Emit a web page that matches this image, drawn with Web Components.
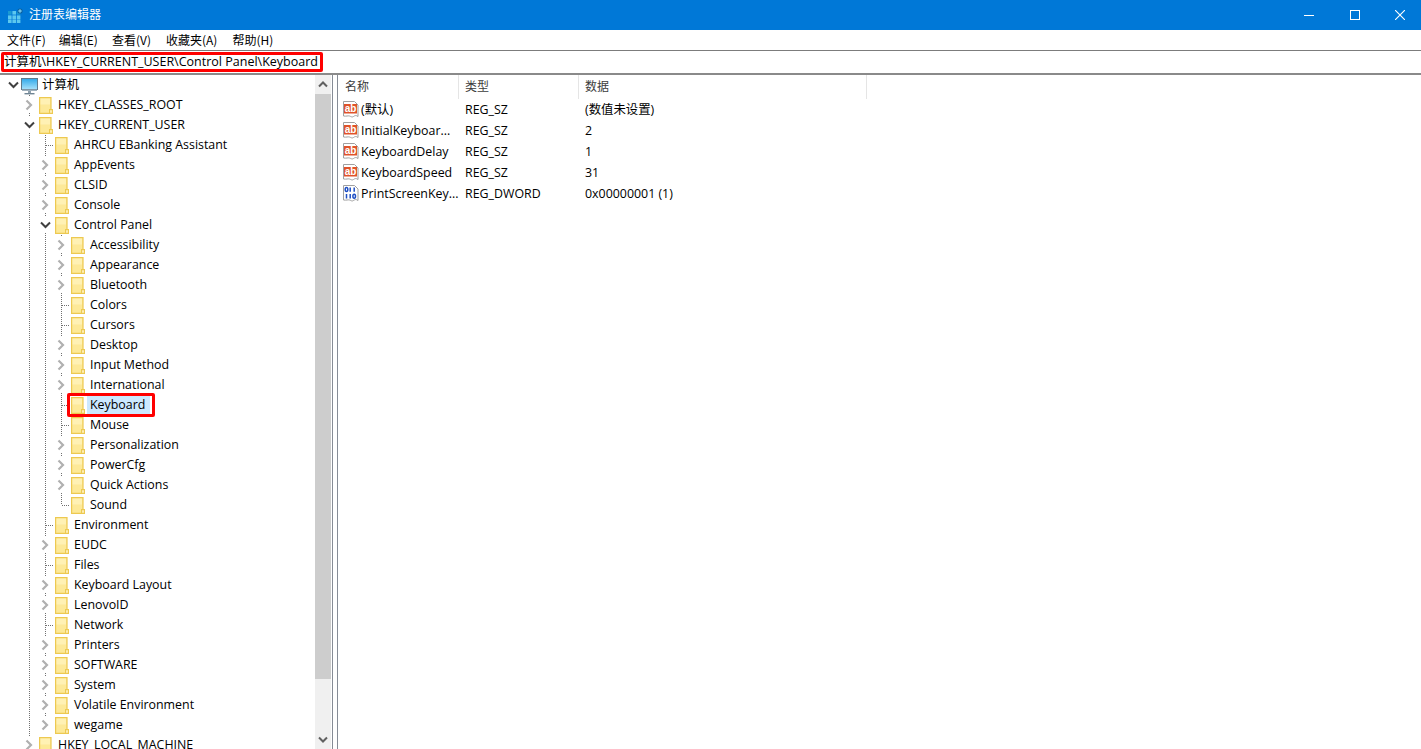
<!DOCTYPE html>
<html lang="zh-CN"><head><meta charset="utf-8"><title>注册表编辑器</title>
<style>
html,body{margin:0;height:100%;overflow:hidden;background:#fff}
body{font:12.4px/20px "Open Sans","Noto Sans CJK SC",sans-serif;color:#000}
</style></head><body>
<template id="t-app"><style>
:host{display:flex;flex-direction:column;height:749px;overflow:hidden}
.panes{flex:1;display:flex;min-height:0}
</style><slot name="top"></slot><div class="panes"><slot></slot></div></template>

<template id="t-title"><style>
:host{display:flex;height:30px;background:#0078d7;color:#fff;align-items:center;font-size:12px}
.ico{margin:0 6px 0 8px;display:flex}
.txt{flex:1;font-family:"Noto Sans CJK SC",sans-serif;line-height:28px;height:30px}
.b{width:46px;height:30px;display:flex;align-items:center;justify-content:center}
.b.c{width:43px;justify-content:flex-start;padding-left:0}
.b.c svg{margin-left:17px}
</style>
<span class="ico"><svg width="15" height="15" viewBox="0 0 15 15"><g fill="#5cc8ee"><rect x="0" y="3" width="3.6" height="3.6" fill="#1b9ad2"/><rect x="4.4" y="3" width="3.6" height="3.6"/><rect x="8.8" y="3" width="3.6" height="3.6" fill="#1b9ad2"/><rect x="0" y="7.4" width="3.6" height="3.6"/><rect x="4.4" y="7.4" width="3.6" height="3.6"/><rect x="8.8" y="7.4" width="3.6" height="3.6"/><rect x="0" y="11.4" width="3.6" height="3.6"/><rect x="4.4" y="11.4" width="3.6" height="3.6"/><rect x="8.8" y="11.4" width="3.6" height="3.6"/></g><circle cx="12" cy="3" r="2.6" fill="#0a5f9e"/><path d="M12 1.2v3.6M10.2 3h3.6" stroke="#8fe0ff" stroke-width="1"/></svg></span>
<span class="txt"><slot></slot></span>
<span class="b"><svg width="10" height="10" viewBox="0 0 10 10"><path d="M0 5.5h10" stroke="#fff"/></svg></span>
<span class="b"><svg width="10" height="10" viewBox="0 0 10 10"><rect x=".5" y=".5" width="9" height="9" fill="none" stroke="#fff"/></svg></span>
<span class="b c"><svg width="10" height="10" viewBox="0 0 10 10"><path d="M0 0l10 10M10 0L0 10" stroke="#fff" stroke-width="1.1"/></svg></span>
</template>

<template id="t-menu"><style>
:host{display:flex;height:20px;padding-left:7px;gap:13px;align-items:center;background:#fff;font-size:12px;line-height:20px;font-family:"Noto Sans CJK SC",sans-serif}
::slotted(.w1){margin-left:1px}
::slotted(.w2){margin-left:2px}
</style><slot></slot></template>

<template id="t-addr"><style>
:host{display:flex;height:22px;border-top:1px solid #7c7c7c;border-bottom:2px solid #8a8a8a;align-items:center;padding-left:4px;background:#fff;position:relative;font-size:12.5px}
.mark{position:absolute;left:1px;top:1px;width:322px;height:20px;box-sizing:border-box;border:3px solid #f00;border-radius:2px}
.t{white-space:nowrap;font-family:"Open Sans","Noto Sans CJK SC",sans-serif}
</style><span class="t"><slot></slot></span><span class="mark"></span></template>

<template id="t-tree"><style>
:host{display:flex;width:331px;height:675px;position:relative;overflow:hidden;background:#fff;flex:none}
.rows{flex:1;min-width:0;overflow:hidden}
.sb{width:16px;background:#f0f0f0;display:flex;flex-direction:column;flex:none}
.a{height:19px;display:flex;align-items:center;justify-content:center;flex:none}
.th{height:585px;background:#cdcdcd;flex:none}
.gap{flex:1}
</style><div class="rows"><slot></slot></div>
<div class="sb"><div class="a"><svg width="10" height="7" viewBox="0 0 10 7"><path d="M1 5.500l4-4 4 4" fill="none" stroke="#606060" stroke-width="2"/></svg></div><div class="th"></div><div class="gap"></div><div class="a" style="height:17px;margin-bottom:2px"><svg width="10" height="7" viewBox="0 0 10 7"><path d="M1 1.500l4 4 4-4" fill="none" stroke="#606060" stroke-width="2"/></svg></div></div>
</template>

<template id="t-row"><style>
:host{display:block;height:20px;position:relative;white-space:nowrap}
.g{position:absolute;width:1px;top:0;bottom:0;background:repeating-linear-gradient(#707070 0 1px,transparent 1px 2px)}
.g.half{bottom:10px}
.s{position:absolute;height:1px;top:10px;background:repeating-linear-gradient(90deg,#707070 0 1px,transparent 1px 2px)}
.ar{position:absolute;top:2px;width:12px;height:16px;background:#fff;display:flex;align-items:center;justify-content:center}
.ic{position:absolute;top:2px}
.tx{position:absolute;top:0;height:20px;line-height:20px}
.sel .tx{background:#cce8ff;padding:0 5px 0 3px;margin-left:-3px}
.mark{position:absolute;top:-2px;box-sizing:border-box;height:24px;width:88px;border:3px solid #f00;border-radius:2px}
</style><div id="r"></div></template>

<template id="t-split"><style>
:host{display:block;width:6px;flex:none;border-left:1px solid #868c96;border-right:1px solid #868c96;box-sizing:border-box;margin-left:1px;height:675px}
</style></template>

<template id="t-list"><style>
:host{display:block;flex:1;min-width:0;background:#fff}
.h{display:flex;height:24px;font-size:12px;font-family:"Noto Sans CJK SC",sans-serif;color:#3c3c3c;align-items:flex-start}
.h span{box-sizing:border-box;padding-left:6px;height:24px;line-height:22px;border-right:1px solid #e5e5e5}
.h .n{padding-left:7px}
.n{width:121px}.t{width:120px}.d{width:288px}
</style><div class="h"><span class="n">名称</span><span class="t">类型</span><span class="d">数据</span></div><slot></slot></template>

<template id="t-val"><style>
:host{display:flex;height:21px;line-height:21px;white-space:nowrap;align-items:center}
.i{width:23px;flex:none;padding-left:5px;box-sizing:border-box;display:flex}
.n{width:97px;flex:none}
.t{width:120px;padding-left:7px;box-sizing:border-box;flex:none}
.d{padding-left:7px}
</style><span class="i" id="i"></span><span class="n" id="n"></span><span class="t" id="t"></span><span class="d" id="d"></span></template>

<reg-app>
<reg-title slot="top">注册表编辑器</reg-title>
<reg-menu slot="top"><span>文件(F)</span><span>编辑(E)</span><span class="w1">查看(V)</span><span class="w2">收藏夹(A)</span><span class="w2">帮助(H)</span></reg-menu>
<reg-addr slot="top">计算机\HKEY_CURRENT_USER\Control Panel\Keyboard</reg-addr>
<reg-tree>
<tree-row level="0" arrow="open" icon="pc">计算机</tree-row>
<tree-row level="1" arrow="closed">HKEY_CLASSES_ROOT</tree-row>
<tree-row level="1" arrow="open">HKEY_CURRENT_USER</tree-row>
<tree-row level="2" >AHRCU EBanking Assistant</tree-row>
<tree-row level="2" arrow="closed">AppEvents</tree-row>
<tree-row level="2" arrow="closed">CLSID</tree-row>
<tree-row level="2" arrow="closed">Console</tree-row>
<tree-row level="2" arrow="open">Control Panel</tree-row>
<tree-row level="3" arrow="closed">Accessibility</tree-row>
<tree-row level="3" arrow="closed">Appearance</tree-row>
<tree-row level="3" arrow="closed">Bluetooth</tree-row>
<tree-row level="3">Colors</tree-row>
<tree-row level="3">Cursors</tree-row>
<tree-row level="3" arrow="closed">Desktop</tree-row>
<tree-row level="3" arrow="closed">Input Method</tree-row>
<tree-row level="3" arrow="closed">International</tree-row>
<tree-row level="3" selected>Keyboard</tree-row>
<tree-row level="3">Mouse</tree-row>
<tree-row level="3" arrow="closed">Personalization</tree-row>
<tree-row level="3" arrow="closed">PowerCfg</tree-row>
<tree-row level="3" arrow="closed">Quick Actions</tree-row>
<tree-row level="3" last>Sound</tree-row>
<tree-row level="2">Environment</tree-row>
<tree-row level="2" arrow="closed">EUDC</tree-row>
<tree-row level="2">Files</tree-row>
<tree-row level="2" arrow="closed">Keyboard Layout</tree-row>
<tree-row level="2" arrow="closed">LenovoID</tree-row>
<tree-row level="2">Network</tree-row>
<tree-row level="2" arrow="closed">Printers</tree-row>
<tree-row level="2" arrow="closed">SOFTWARE</tree-row>
<tree-row level="2" arrow="closed">System</tree-row>
<tree-row level="2" arrow="closed">Volatile Environment</tree-row>
<tree-row level="2" arrow="closed" last>wegame</tree-row>
<tree-row level="1" arrow="closed">HKEY_LOCAL_MACHINE</tree-row>
</reg-tree>
<reg-split></reg-split>
<reg-list>
<reg-val kind="sz" name="(默认)" type="REG_SZ" data="(数值未设置)"></reg-val>
<reg-val kind="sz" name="InitialKeyboar..." type="REG_SZ" data="2"></reg-val>
<reg-val kind="sz" name="KeyboardDelay" type="REG_SZ" data="1"></reg-val>
<reg-val kind="sz" name="KeyboardSpeed" type="REG_SZ" data="31"></reg-val>
<reg-val kind="bin" name="PrintScreenKey..." type="REG_DWORD" data="0x00000001 (1)"></reg-val>
</reg-list>
</reg-app>
<script>
const tpl=(id,el)=>{const r=el.attachShadow({mode:'open'});r.appendChild(document.getElementById(id).content.cloneNode(true));return r};
const simple=(tag,id)=>customElements.define(tag,class extends HTMLElement{constructor(){super();tpl(id,this)}});
simple('reg-app','t-app');simple('reg-title','t-title');simple('reg-menu','t-menu');simple('reg-addr','t-addr');simple('reg-tree','t-tree');simple('reg-split','t-split');simple('reg-list','t-list');
const FOLDER='<svg width="14" height="17" viewBox="0 0 14 17"><path d="M.6.6h11.400v15.800H.6z" fill="#fde998" stroke="#edc951" stroke-width="1.200"/><path d="M1.500 1.500h9.500v6h-9.500z" fill="#fff3c0" opacity=".7"/><path d="M10.600 16.400v-3.800h2.800v3.800z" fill="#fff6d0" stroke="#edc951" stroke-width="1.200"/></svg>';
const PC='<svg width="18" height="17" viewBox="0 0 18 17"><defs><linearGradient id="s" x1="0" y1="0" x2="0" y2="1"><stop offset="0" stop-color="#2fa8e8"/><stop offset="1" stop-color="#a8e2fb"/></linearGradient></defs><rect x=".5" y=".5" width="16" height="11" fill="url(#s)" stroke="#5f7a8c"/><rect x="1" y="11.500" width="15" height="1.500" fill="#9fb0bc"/><rect x="7" y="13" width="3" height="2" fill="#8fa0ac"/><rect x="3.500" y="15" width="10" height="1.400" fill="#6f8494"/></svg>';
customElements.define('tree-row',class extends HTMLElement{
  constructor(){super();tpl('t-row',this)}
  connectedCallback(){
    const L=+this.getAttribute('level'),a=this.getAttribute('arrow'),x=13+16*L,pc=this.getAttribute('icon')==='pc';
    const r=this.shadowRoot.getElementById('r');let h='';
    for(let i=1;i<L;i++)h+=`<i class="g" style="left:${13+16*i}px"></i>`;
    if(L>0)h+=`<i class="g${this.hasAttribute('last')?' half':''}" style="left:${x}px"></i>`;
    if(!a&&L>0)h+=`<i class="s" style="left:${x+1}px;width:8px"></i>`;
    if(a==='closed')h+=`<span class="ar" style="left:${x-6}px"><svg width="8" height="12" viewBox="0 0 8 12"><path d="M1.500 1.500L6 6l-4.500 4.500" fill="none" stroke="#b0b0b0" stroke-width="2.200"/></svg></span>`;
    if(a==='open')h+=`<span class="ar" style="left:${x-6}px"><svg width="11" height="8" viewBox="0 0 11 8"><path d="M1 1.500l4.500 4.500L10 1.500" fill="none" stroke="#404040" stroke-width="2"/></svg></span>`;
    h+=`<span class="ic" style="left:${x+(pc?8:10)}px;top:${pc?3:2}px">${pc?PC:FOLDER}</span>`;
    h+=`<span class="tx" style="left:${x+29}px"><slot></slot></span>`;
    if(this.hasAttribute('selected')){r.className='sel';h+=`<span class="mark" style="left:${x+6}px"></span>`}
    r.innerHTML=h;
  }
});
const PAGE='<path d="M.5.500h11l3.500 3.500v11.500c-2-1.500-3-1-4.500 0s-2.500 0-4-.5-3 .5-6 0z" fill="#fff" stroke="#a0a0a0"/>';
const ICONS={
 sz:'<svg width="16" height="17" viewBox="0 0 16 17">'+PAGE+'<rect x="1" y="3" width="13" height="9.500" fill="#e0532a"/><text x="7.500" y="11" font-family="Liberation Sans,sans-serif" font-size="10" font-weight="700" fill="#fff" text-anchor="middle">ab</text></svg>',
 bin:'<svg width="16" height="17" viewBox="0 0 16 17">'+PAGE+'<g fill="none" stroke="#1f4fc4" stroke-width="1.500"><ellipse cx="3.500" cy="4.600" rx="1.300" ry="2"/><path d="M7.200 2.500v4.200M11.200 2.500v4.200M3.500 9v4.500M7.200 9v4.500"/><ellipse cx="11.200" cy="11.200" rx="1.300" ry="2"/></g></svg>'};
customElements.define('reg-val',class extends HTMLElement{
  constructor(){super();tpl('t-val',this)}
  connectedCallback(){const s=this.shadowRoot;
    s.getElementById('i').innerHTML=ICONS[this.getAttribute('kind')];
    s.getElementById('n').textContent=this.getAttribute('name');
    s.getElementById('t').textContent=this.getAttribute('type');
    s.getElementById('d').textContent=this.getAttribute('data');}
});
</script>
</body></html>
